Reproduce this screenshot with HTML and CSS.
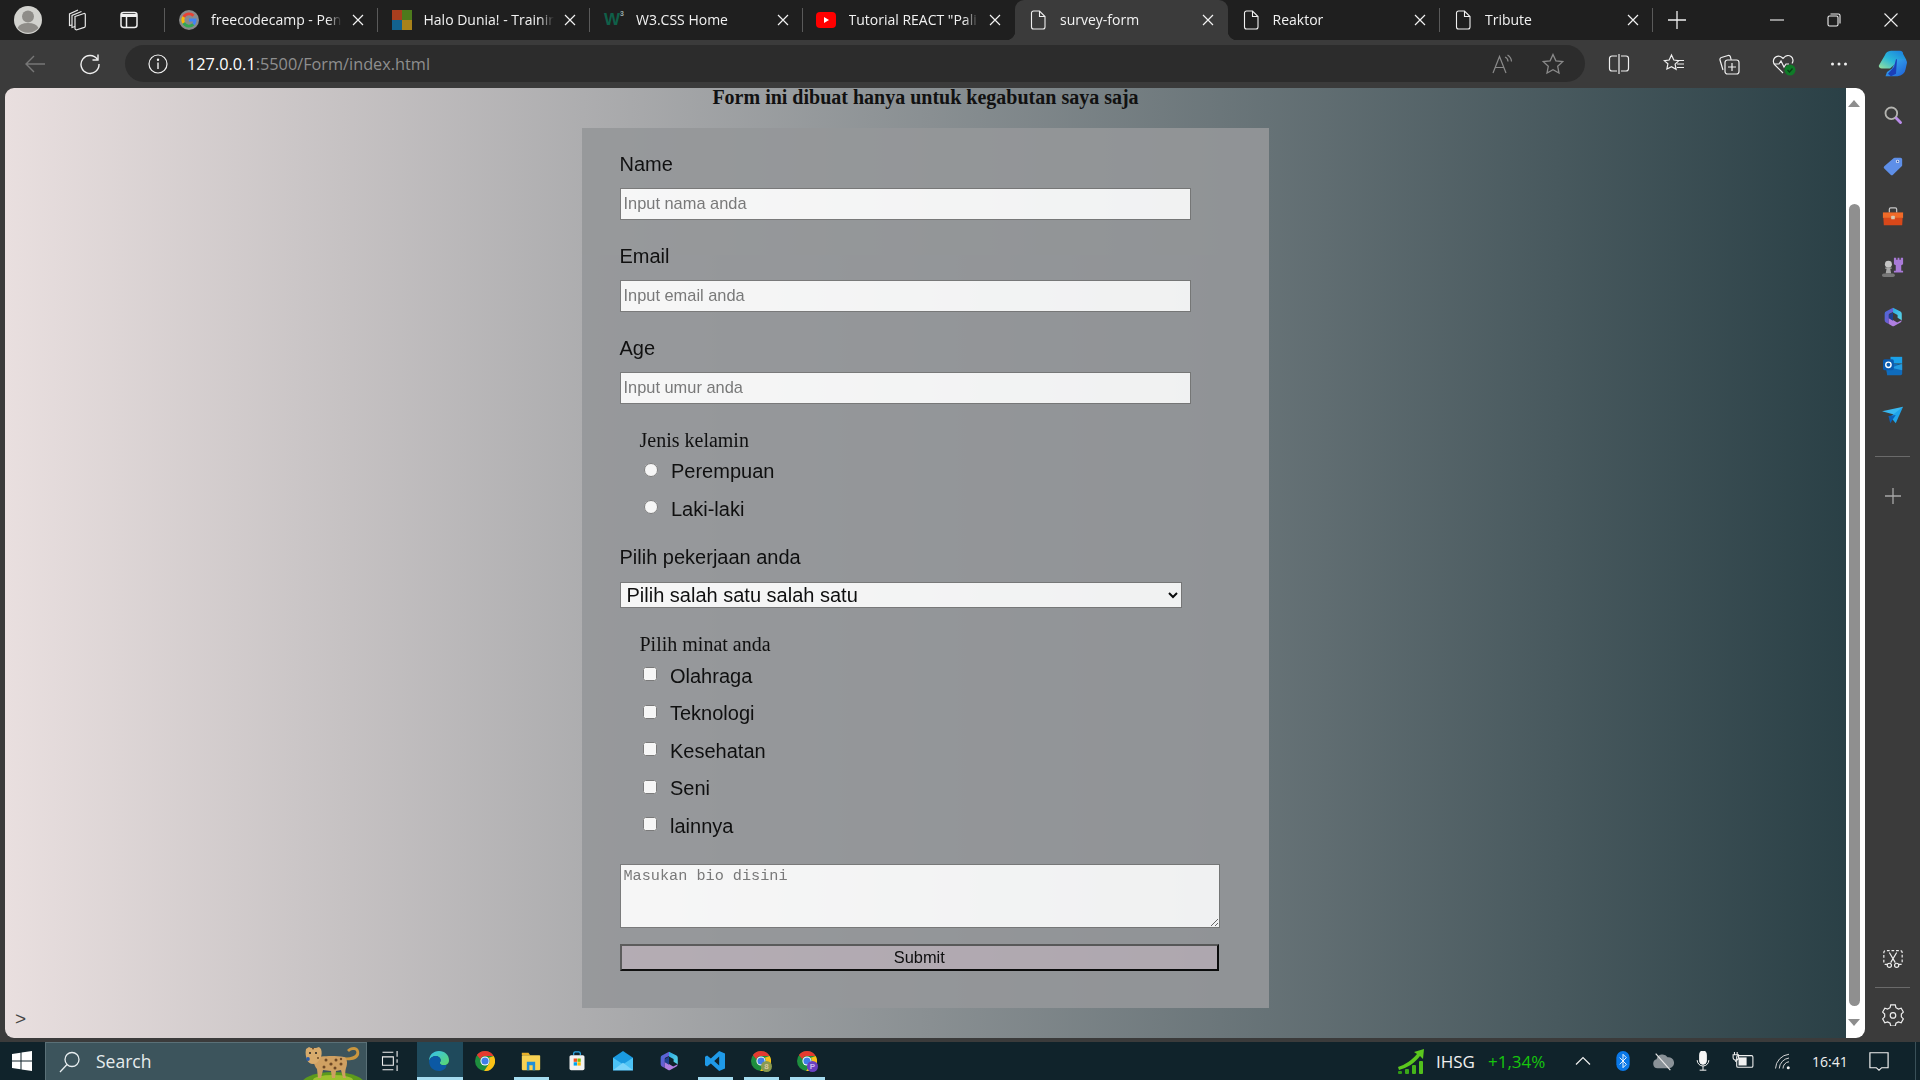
FILE: index.html
```html
<!DOCTYPE html>
<html lang="id">
<head>
<meta charset="utf-8">
<title>survey-form</title>
<link rel="stylesheet" href="styles.css">
</head>
<body>
<svg class="defs" width="0" height="0" aria-hidden="true">
  <symbol id="x" viewBox="0 0 12 12"><path d="M1 1l10 10M11 1L1 11" fill="none" stroke="#f2f2f2" stroke-width="1.2"/></symbol>
  <symbol id="doc" viewBox="0 0 16 20"><path d="M3.5 1h6L15 6.5V17a2 2 0 0 1-2 2H3.500a2 2 0 0 1-2-2V3a2 2 0 0 1 2-2zM9.500 1v5.500H15" fill="none" stroke="#f0f0f0" stroke-width="1.1"/></symbol>
  <symbol id="chrome" viewBox="0 0 24 24"><circle cx="12" cy="12" r="12" fill="#1e8e3e"/><path d="M12 0a12 12 0 0 1 10.400 6H12a6 6 0 0 0-5.600 3.800L2.300 4.900A12 12 0 0 1 12 0z" fill="#e53a30"/><path d="M22.400 6A12 12 0 0 1 11 24l5.500-8.500A6 6 0 0 0 16.500 8z" fill="#fbc116"/><circle cx="12" cy="12" r="5.500" fill="#fff"/><circle cx="12" cy="12" r="4.300" fill="#3f7de8"/></symbol>
  <symbol id="m365" viewBox="0 0 24 24"><defs><linearGradient id="ma" x1="0" y1="0" x2="1" y2="1"><stop offset="0" stop-color="#3f6fd8"/><stop offset="1" stop-color="#8a4fd0"/></linearGradient><linearGradient id="mb" x1="0" y1="0" x2="1" y2="1"><stop offset="0" stop-color="#2aa8e0"/><stop offset="1" stop-color="#5ed8e8"/></linearGradient></defs><path d="M12 1l9 4.500a3 3 0 0 1 1.500 2.600V16l-5-3V9.500L12 6.500z" fill="url(#mb)"/><path d="M12 1L3.500 5.500A3 3 0 0 0 2 8v8a3 3 0 0 0 1.500 2.600L7 20.500V8.500L12 6z" fill="url(#ma)"/><path d="M7 20.500l4 2.200a2.500 2.500 0 0 0 2.400 0l7.600-4.200a3 3 0 0 0 1.500-2.500L17 18.500 12.500 16 7 13z" fill="#b07fe0"/><path d="M7 9.500l5-3v10l-5-3z" fill="#1d3f8f"/></symbol>
</svg>

<header class="tabstrip">
  <div class="strip-left">
    <svg class="avatar" viewBox="0 0 28 28"><circle cx="14" cy="14" r="14" fill="#d2d2ce"/><circle cx="14" cy="10.500" r="6" fill="#8e8c88"/><path d="M3.500 22a11 7 0 0 1 21 0a14 14 0 0 1-21 0z" fill="#8e8c88"/></svg>
    <span class="strip-slot"><svg class="i22" viewBox="0 0 22 22" fill="none" stroke="#e8e8e8" stroke-width="1.200"><path d="M9 7.500L18 4.500a1 1 0 0 1 1.300 1v11.500a1.500 1.500 0 0 1-1 1.400L11 20.800a1.500 1.500 0 0 1-2-1.400z"/><path d="M9 17.500L6 18.500V6.500L15.500 2.500"/><path d="M6 16l-2.500.5V5L12 1"/></svg></span>
    <span class="strip-slot"><svg class="i20" viewBox="0 0 20 20" fill="none" stroke="#f0f0f0" stroke-width="1.500"><rect x="2" y="2.500" width="16" height="15" rx="2.500"/><path d="M2 5.500h16" stroke-width="3"/><path d="M7.500 6v11"/></svg></span>
  </div>
  <div class="tab sep">
    <svg class="fav" viewBox="0 0 18 18" fill="none" stroke-width="2.600"><circle cx="9" cy="9" r="9" fill="#8b8b8b" stroke="none"/><path d="M13 5.200A5.500 5.500 0 0 0 4.200 6.300" stroke="#e94235"/><path d="M4.200 6.300a5.500 5.500 0 0 0 0 5.400" stroke="#fabb05"/><path d="M4.200 11.700a5.500 5.500 0 0 0 8.800 1.100" stroke="#34a853"/><path d="M13 12.800A5.500 5.500 0 0 0 14.500 9H9" stroke="#4285f4"/></svg>
    <span class="title">freecodecamp - Pen</span><svg class="close"><use href="#x"/></svg>
  </div>
  <div class="tab sep">
    <span class="ms"><i class="ms-a"></i><i class="ms-b"></i><i class="ms-c"></i><i class="ms-d"></i></span>
    <span class="title">Halo Dunia! - Trainin</span><svg class="close"><use href="#x"/></svg>
  </div>
  <div class="tab sep">
    <span class="fav w3">W<sup>3</sup></span>
    <span class="title">W3.CSS Home</span><svg class="close"><use href="#x"/></svg>
  </div>
  <div class="tab">
    <svg class="fav yt" viewBox="0 0 20 20"><rect y="2" width="20" height="16" rx="4" fill="#f00"/><path d="M8 7l5 3-5 3z" fill="#fff"/></svg>
    <span class="title">Tutorial REACT "Pali</span><svg class="close"><use href="#x"/></svg>
  </div>
  <div class="tab active">
    <svg class="fav doc"><use href="#doc"/></svg>
    <span class="title">survey-form</span><svg class="close"><use href="#x"/></svg>
  </div>
  <div class="tab sep">
    <svg class="fav doc"><use href="#doc"/></svg>
    <span class="title">Reaktor</span><svg class="close"><use href="#x"/></svg>
  </div>
  <div class="tab sep">
    <svg class="fav doc"><use href="#doc"/></svg>
    <span class="title">Tribute</span><svg class="close"><use href="#x"/></svg>
  </div>
  <svg class="newtab" viewBox="0 0 18 18"><path d="M9 0v18M0 9h18" stroke="#f0f0f0" stroke-width="1.300" fill="none"/></svg>
  <div class="winctl">
    <svg class="wc" viewBox="0 0 14 14"><path d="M0 7h14" stroke="#f0f0f0" stroke-width="1.100"/></svg>
    <svg class="wc" viewBox="0 0 14 14" fill="none" stroke="#f0f0f0" stroke-width="1.100"><rect x="1" y="3" width="10" height="10" rx="1.500"/><path d="M3.500 1h8a1.500 1.500 0 0 1 1.500 1.500v8"/></svg>
    <svg class="wc" viewBox="0 0 14 14"><path d="M.5.500l13 13M13.500.500l-13 13" stroke="#f0f0f0" stroke-width="1.100"/></svg>
  </div>
</header>

<nav class="toolbar">
  <span class="nav-slot"><svg class="i22" viewBox="0 0 22 22" fill="none" stroke="#777" stroke-width="1.400"><path d="M21 11H2M10 3l-8 8 8 8"/></svg></span>
  <span class="nav-slot"><svg class="i22" viewBox="0 0 22 22" fill="none" stroke="#f0f0f0" stroke-width="1.400"><path d="M18.500 6.500A9 9 0 1 0 20 11"/><path d="M19 1.500v5.500h-5.500"/></svg></span>
  <div class="pill">
    <svg class="i20" viewBox="0 0 20 20" fill="none" stroke="#f0f0f0" stroke-width="1.200"><circle cx="10" cy="10" r="9"/><path d="M10 8.500V15" stroke-width="1.400"/><circle cx="10" cy="5.800" r=".6" fill="#f0f0f0"/></svg>
    <span class="url"><b>127.0.0.1</b>:5500/Form/index.html</span>
    <span class="pill-icons">
      <span class="pill-slot"><svg class="i22" viewBox="0 0 22 22" fill="none" stroke="#8a8a8a" stroke-width="1.200"><path d="M1 20L7.500 3.500 14 20M3.500 14.500h8"/><path d="M13 4a5 5 0 0 1 3 4.500M15.500 2a8 8 0 0 1 4 6.500"/></svg></span>
      <span class="pill-slot"><svg class="i22" viewBox="0 0 22 22" fill="none" stroke="#8a8a8a" stroke-width="1.300"><path d="M11 1.500l2.900 6.300 6.800.8-5 4.700 1.300 6.800-6-3.400-6 3.400 1.300-6.800-5-4.700 6.800-.8z"/></svg></span>
    </span>
  </div>
  <div class="tools">
    <span class="tool"><svg class="i22" viewBox="0 0 22 22" fill="none" stroke="#f0f0f0" stroke-width="1.200"><path d="M9 3H4a2.500 2.500 0 0 0-2.500 2.500v10A2.500 2.500 0 0 0 4 18h5M13 3h5a2.500 2.500 0 0 1 2.500 2.500v10A2.500 2.500 0 0 1 18 18h-5M11 1v20"/></svg></span>
    <span class="tool"><svg class="i22" viewBox="0 0 22 22" fill="none" stroke="#f0f0f0" stroke-width="1.200"><path d="M8.500 2l2.300 5 5 .6-3.700 3.500 1 5.200-4.600-2.600L3.900 16l1-5.200L1.200 7.600l5-.6zM14 11h7M14 7.500h7M14 14.500h7"/></svg></span>
    <span class="tool"><svg class="i22" viewBox="0 0 22 22" fill="none" stroke="#f0f0f0" stroke-width="1.200"><path d="M5 17L2 7a2 2 0 0 1 1.400-2.500L10 2.500a2 2 0 0 1 2.400 1.300l.8 3"/><rect x="7" y="7" width="14" height="14" rx="2.500"/><path d="M14 10v8M10 14h8"/></svg></span>
    <span class="tool"><svg class="i24" viewBox="0 0 24 24"><path d="M11 21L3 13a5 5 0 0 1 7-7.500L11 6.500l1-1a5 5 0 0 1 8 6" fill="none" stroke="#f0f0f0" stroke-width="1.200"/><path d="M2 12h5l2-3 3 6 2-3h3" fill="none" stroke="#f0f0f0" stroke-width="1.200"/><circle cx="18" cy="18" r="5.500" fill="#0f7b28"/><path d="M15.500 18l2 2 3-3.500" fill="none" stroke="#0a3d16" stroke-width="1.300"/></svg></span>
    <span class="tool"><svg class="i20" viewBox="0 0 20 20" fill="#f0f0f0"><circle cx="3.500" cy="10" r="1.500"/><circle cx="10" cy="10" r="1.500"/><circle cx="16.500" cy="10" r="1.500"/></svg></span>
    <span class="tool tool-end"><svg class="copilot" viewBox="0 0 30 32" preserveAspectRatio="none"><defs><linearGradient id="ca" x1="0" y1="1" x2="1" y2="0"><stop offset="0" stop-color="#9be29a"/><stop offset=".45" stop-color="#2ab8d8"/><stop offset="1" stop-color="#1a78e0"/></linearGradient><linearGradient id="cb" x1="0" y1="0" x2="1" y2="1"><stop offset="0" stop-color="#39b6f0"/><stop offset="1" stop-color="#1f5fd8"/></linearGradient></defs><path d="M17 1h5a3 3 0 0 1 3 3.500L28.500 12l-10 3-6.500 7H4a3 3 0 0 1-3-4L7 6a7 7 0 0 1 6-5z" fill="url(#ca)"/><path d="M19 11h6a4 4 0 0 1 4 4l-1.500 8a9 9 0 0 1-8 8H7.500L9 26l5-4z" fill="url(#cb)"/><path d="M18 11l-2 9-6 8 3 3 5-3 1-17z" fill="#1b3fb8"/></svg></span>
  </div>
</nav>

<div class="main">
  <main class="page">
    <h3 class="heading">Form ini dibuat hanya untuk kegabutan saya saja</h3>
    <form class="panel">
      <label class="field-label">Name</label>
      <input class="text-input" type="text" placeholder="Input nama anda">
      <label class="field-label">Email</label>
      <input class="text-input" type="text" placeholder="Input email anda">
      <label class="field-label">Age</label>
      <input class="text-input" type="text" placeholder="Input umur anda">
      <div class="group-title">Jenis kelamin</div>
      <label class="opt opt-radio"><input type="radio" name="jk"><span>Perempuan</span></label>
      <label class="opt opt-radio"><input type="radio" name="jk"><span>Laki-laki</span></label>
      <label class="field-label after-radio">Pilih pekerjaan anda</label>
      <select class="job"><option>Pilih salah satu salah satu</option></select>
      <div class="group-title group-minat">Pilih minat anda</div>
      <label class="opt opt-check"><input type="checkbox"><span>Olahraga</span></label>
      <label class="opt opt-check"><input type="checkbox"><span>Teknologi</span></label>
      <label class="opt opt-check"><input type="checkbox"><span>Kesehatan</span></label>
      <label class="opt opt-check"><input type="checkbox"><span>Seni</span></label>
      <label class="opt opt-check"><input type="checkbox"><span>lainnya</span></label>
      <textarea class="bio" placeholder="Masukan bio disini"></textarea>
      <input class="submit" type="submit" value="Submit">
    </form>
    <div class="prompt">&gt;</div>
  </main>
  <div class="scrollbar">
    <i class="arrow-up"></i>
    <i class="thumb"></i>
    <i class="arrow-down"></i>
  </div>
  <aside class="sidebar">
    <div class="side-top">
      <span class="side-slot"><svg viewBox="0 0 24 24" fill="none"><circle cx="10" cy="10" r="7" stroke="#b4b4b0" stroke-width="2.200"/><path d="M16 16l5 5" stroke="#b98be8" stroke-width="3.500" stroke-linecap="round"/></svg></span>
      <span class="side-slot side-down"><svg viewBox="0 0 24 24"><path d="M14 2h7a2 2 0 0 1 2 2v7a2 2 0 0 1-.6 1.400L12 22.500a2 2 0 0 1-2.800 0L1.500 15a2 2 0 0 1 0-2.800L12.600 2.600A2 2 0 0 1 14 2z" fill="#5e8fe8"/><circle cx="17.500" cy="6.500" r="2" fill="#e8eefc"/><circle cx="17.500" cy="6.500" r="1" fill="#2d4f9a"/></svg></span>
      <span class="side-slot side-down"><svg class="wide" viewBox="0 0 24 24"><path d="M8 7V3.500A1.500 1.500 0 0 1 9.500 2h5A1.500 1.500 0 0 1 16 3.500V7" fill="none" stroke="#c8c8c8" stroke-width="1.300"/><path d="M1 7h22v6H1z" fill="#f06a28"/><path d="M1.500 13h21l-.5 8H2z" fill="#d8481a"/><rect x="10" y="10.500" width="4" height="4" rx="1" fill="#d8c8b0"/></svg></span>
      <span class="side-slot"><svg class="wide" viewBox="0 0 24 24"><path d="M13 2h2.500v2H17V2h2v2h1.500V2H23v7l-2 1v6h2v2H13v-2h2v-6l-2-1z" fill="#a97ad8"/><circle cx="7" cy="9" r="3.800" fill="#c4c4c4"/><path d="M3.500 12.500h7v1.500H9l1 5H4l1-5H3.500z" fill="#a8a8a8"/><rect y="19" width="14" height="4" rx="2" fill="#777"/></svg></span>
      <span class="side-slot"><svg><use href="#m365"/></svg></span>
      <span class="side-slot side-up"><svg viewBox="0 0 24 24"><rect x="9" y="1" width="14" height="8" fill="#1aa0e8"/><path d="M3 11l10-2 10 2v10a2 2 0 0 1-2 2H5z" fill="#0f6cbd"/><path d="M10 14l13-5v8z" fill="#28a8ea" opacity=".8"/><rect x="0" y="4" width="13" height="13" rx="2" fill="#0a5bb0"/><circle cx="6.500" cy="10.500" r="3.200" fill="none" stroke="#fff" stroke-width="1.700"/></svg></span>
      <span class="side-slot side-up"><svg class="wide" viewBox="0 0 24 24"><path d="M0 8l23-5-8 9z" fill="#39b8f0"/><path d="M23 3L15 21l-6-7z" fill="#1fa4ea"/><path d="M7 13l2 8 6-9z" fill="#0a5fb8"/></svg></span>
      <i class="side-divider side-divider-top"></i>
      <span class="side-slot"><svg class="i16" viewBox="0 0 16 16"><path d="M8 0v16M0 8h16" stroke="#a8a8a8" stroke-width="1.300"/></svg></span>
    </div>
    <div class="side-bottom">
      <span class="side-slot"><svg class="wide" viewBox="0 0 24 24" fill="none" stroke="#eee" stroke-width="1.300"><path d="M6 19H4a2 2 0 0 1-2-2V6a2 2 0 0 1 2-2h16a2 2 0 0 1 2 2v11a2 2 0 0 1-2 2h-2" stroke-dasharray="3 2"/><path d="M8 6l6.500 11M16 6L9.500 17"/><circle cx="8" cy="20" r="2.300"/><circle cx="16" cy="20" r="2.300"/></svg></span>
      <i class="side-divider"></i>
      <span class="side-slot side-gear"><svg class="wide" viewBox="0 0 24 24" fill="none" stroke="#eee" stroke-width="1.300"><path d="M9.500 1h5l.7 3 2.700 1.500 3-.9 2.400 4.200-2.200 2.200v3l2.200 2.200-2.400 4.200-3-.9-2.700 1.500-.7 3h-5l-.7-3-2.700-1.500-3 .9L.7 16.200 2.900 14v-3L.7 8.800 3.100 4.600l3 .9L8.800 4z"/><circle cx="12" cy="12.500" r="3"/></svg></span>
    </div>
  </aside>
</div>
<div class="edge"></div>

<footer class="taskbar">
  <span class="start"><svg class="winlogo" viewBox="0 0 20 20" fill="#fff"><path d="M0 3l8.500-1.200V9.500H0zM9.500 1.600L20 0v9.500H9.500zM0 10.500h8.500v7.700L0 17zM9.500 10.500H20V20L9.500 18.400z"/></svg></span>
  <div class="search">
    <svg class="i22" viewBox="0 0 22 22" fill="none" stroke="#e8eef0" stroke-width="1.300"><circle cx="13" cy="8.500" r="7"/><path d="M8 13.500L1 21"/></svg>
    <span class="search-text">Search</span>
    <svg class="leopard" viewBox="0 0 66 36">
      <ellipse cx="33" cy="42" rx="33" ry="14" fill="#5d9a1c"/>
      <ellipse cx="33" cy="36" rx="20" ry="5" fill="#9cc22e"/>
      <path d="M44 16C50 17 57 16 59 11c1-4-1-8-5-8-3 0-5 1-7 3l2 2c2-2 3-2 5-2 2 0 3 2 2 4-2 3-8 4-13 3z" fill="#c9963f"/>
      <path d="M14 14c6-2 20-3 30-1 3 1 4 6 2 11-1 3-1 7 0 10h-3l-2-8-5 1-1 7h-3l-1-7-8-1-2 8h-3l-1-9c-3-3-4-9-3-11z" fill="#cfa062"/>
      <path d="M6 5l3-2 2 1h5l3-1 2 2c1 3 1 7-1 10-2 3-4 5-7 5-3 0-5-2-6-4-1-3-2-7-1-11z" fill="#d8ab6c"/>
      <circle cx="10" cy="9" r="1" fill="#222"/><circle cx="16" cy="9" r="1" fill="#222"/><ellipse cx="8" cy="15" rx="1.800" ry="2" fill="#2a5aa8"/>
      <g fill="#6d4826"><circle cx="26" cy="16" r="1.500"/><circle cx="31" cy="20" r="1.600"/><circle cx="36" cy="16" r="1.500"/><circle cx="41" cy="20" r="1.500"/><circle cx="24" cy="23" r="1.500"/><circle cx="35" cy="24" r="1.500"/><circle cx="41" cy="15" r="1.200"/><circle cx="13" cy="4.500" r="1"/><circle cx="18" cy="14" r="1"/></g>
    </svg>
  </div>
  <span class="taskview"><svg class="i20" viewBox="0 0 20 24" fill="none" stroke="#f2f2f2" stroke-width="1.300"><path d="M1 1.500h13M1 22.500h13M1 7h13v10H1z"/><path d="M18.500 0v7M18.500 10v4M18.500 17v7"/></svg></span>
  <span class="app app-active"><svg viewBox="0 0 24 24"><defs><linearGradient id="ea" x1="0" y1="0" x2="1" y2="1"><stop offset="0" stop-color="#35c1f1"/><stop offset="1" stop-color="#5cd86b"/></linearGradient></defs><path d="M12 0c7 0 12 5 12 11 0 4-3 6-6 6-3 0-5-1-5-3 0-1 1-1 1-3 0-3-3-5-6-5C4 6 1 9 0 12 0 5 5 0 12 0z" fill="url(#ea)"/><path d="M0 12c1-3 4-6 8-6 3 0 6 2 6 5 0 2-1 2-1 3 0 2 2 3 5 3l3-.5C21 21 17 24 12 24 5 24 0 19 0 12z" fill="#0c59a4"/></svg></span>
  <span class="app"><svg><use href="#chrome"/></svg></span>
  <span class="app app-open"><svg viewBox="0 0 24 24"><path d="M1 2h8l2 3H1z" fill="#e8b028"/><rect x="1" y="5" width="22" height="18" rx="1" fill="#f8d253"/><path d="M7 13h10v10h-3v-6h-4v6H7z" fill="#1f8fd8"/></svg></span>
  <span class="app"><svg viewBox="0 0 24 24"><path d="M8 5V3a2 2 0 0 1 2-2h4a2 2 0 0 1 2 2v2" fill="none" stroke="#2ca8e8" stroke-width="1.500"/><rect x="3" y="5" width="18" height="18" rx="2" fill="#f2f2f2"/><rect x="8" y="9" width="4" height="4" fill="#f25022"/><rect x="12.500" y="9" width="4" height="4" fill="#7fba00"/><rect x="8" y="13.500" width="4" height="4" fill="#00a4ef"/><rect x="12.500" y="13.500" width="4" height="4" fill="#ffb900"/></svg></span>
  <span class="app"><svg viewBox="0 0 24 24"><path d="M0 8l12-8 12 8v15H0z" fill="#1a9ae0"/><path d="M0 8l12 8 12-8v15H0z" fill="#4cc2f5"/><path d="M0 23l12-9 12 9z" fill="#7ad4fa"/></svg></span>
  <span class="app"><svg><use href="#m365"/></svg></span>
  <span class="app app-open"><svg viewBox="0 0 24 24"><path d="M17 0l7 3v18l-7 3-10-9-4.500 3.500L0 17V7l2.500-1.500L7 9zM17 6.500L11 12l6 5.500z" fill="#1f9ae8"/></svg></span>
  <span class="app app-open"><span class="badged"><svg><use href="#chrome"/></svg><i class="badge badge-cat">8</i></span></span>
  <span class="app app-open"><span class="badged"><svg><use href="#chrome"/></svg><i class="badge badge-p">P</i></span></span>
  <div class="tray">
    <svg class="chart" viewBox="0 0 28 26"><path d="M1 19C8 17 15 12 20 6l-3-2 10-3-1 10-3-3C18 15 10 20 2 22z" fill="#5cc81e"/><rect x="1" y="23" width="4" height="3" rx="1" fill="#2f9a14"/><rect x="8" y="21" width="4" height="5" rx="1" fill="#3aa818"/><rect x="15" y="17" width="4" height="9" rx="1" fill="#45b41a"/><rect x="22" y="13" width="4" height="13" rx="1" fill="#52c01c"/></svg>
    <span class="ihsg">IHSG</span>
    <span class="pct">+1,34%</span>
    <span class="tray-slot tray-first"><svg class="i16" viewBox="0 0 16 16" fill="none" stroke="#f0f0f0" stroke-width="1.200"><path d="M1 11.500L8 4.500l7 7"/></svg></span>
    <span class="tray-slot"><svg class="t-bt" viewBox="0 0 16 24"><rect width="16" height="24" rx="8" fill="#0a78e8"/><path d="M4 8l8 8-4 4V4l4 4-8 8" fill="none" stroke="#fff" stroke-width="1.100"/></svg></span>
    <span class="tray-slot"><svg class="t-cloud" viewBox="0 0 24 24"><path d="M6 20a5 5 0 0 1-1-9.800A6.500 6.500 0 0 1 17 8a5 5 0 0 1 2 12z" fill="#8a9298"/><path d="M4 4l16 18" stroke="#e8e8e8" stroke-width="1.300"/></svg></span>
    <span class="tray-slot"><svg class="t-mic" viewBox="4 0 16 24" fill="none" stroke="#f5f5f5" stroke-width="1.200"><rect x="8" y="0" width="8" height="16" rx="4" fill="#f5f5f5"/><path d="M5 11a7 7 0 0 0 14 0M12 18v5M8 23h8"/></svg></span>
    <span class="tray-slot"><svg class="t-bat" viewBox="0 0 24 20" fill="none" stroke="#f0f0f0" stroke-width="1.200"><rect x="5" y="4" width="18" height="13" rx="1.500"/><rect x="7" y="6" width="9" height="9" fill="#f0f0f0" stroke="none"/><path d="M2.500 0v3M5.500 0v3M1 3h6v3a3 3 0 0 1-6 0zM4 9v2"/></svg></span>
    <span class="tray-slot"><svg class="t-wifi" viewBox="0 0 24 24" fill="none" stroke="#d8d8d8" stroke-width="1.300"><path d="M2 22A20 20 0 0 1 20 3M7 22A15 15 0 0 1 20 8M12 22a9 9 0 0 1 8-9"/><circle cx="19" cy="21" r="2" fill="#f0f0f0" stroke="none"/></svg></span>
    <span class="clock">16:41</span>
    <span class="notif"><svg class="i20" viewBox="0 0 22 24" fill="none" stroke="#f2f2f2" stroke-width="1.300" preserveAspectRatio="none"><path d="M1 2h20v18h-7l-3 3-3-3H1z"/></svg></span>
    <i class="showdesk"></i>
  </div>
</footer>
</body>
</html>
```
FILE: styles.css
```css
* { box-sizing: border-box; }
html, body { margin: 0; height: 100%; overflow: hidden; }
body { width: 1920px; height: 1080px; display: flex; flex-direction: column; background: #3b3b3b; font-family: "Liberation Sans", Arial, sans-serif; }
.defs { position: absolute; }
svg { display: block; flex: none; }
i { display: block; font-style: normal; }
.i16 { width: 16px; height: 16px; }
.i20 { width: 20px; height: 20px; }
.i22 { width: 22px; height: 22px; }
.i24 { width: 24px; height: 24px; }

/* tab strip */
.tabstrip { height: 40px; background: #1f1f1f; display: flex; align-items: stretch; flex: none; }
.strip-left { width: 165px; display: flex; align-items: center; padding-left: 14px; position: relative; flex: none; }
.strip-left::after { content: ""; position: absolute; right: 0; top: 8px; bottom: 8px; width: 1px; background: #5a5a5a; }
.avatar { width: 28px; height: 28px; }
.strip-slot { width: 52px; display: flex; justify-content: center; }
.strip-slot:first-of-type { margin-left: 9px; }
.tab { width: 212.5px; flex: none; display: flex; align-items: center; padding: 0 14px 0 14px; position: relative; color: #f2f2f2; font: 14px "Open Sans", sans-serif; }
.tab.sep::after { content: ""; position: absolute; right: 0; top: 8px; bottom: 8px; width: 1px; background: #5a5a5a; }
.tab.active { background: #3b3b3b; border-radius: 9px 9px 0 0; }
.tab.active::before, .tab.active::after { content: ""; position: absolute; bottom: 0; width: 9px; height: 9px; }
.tab.active::before { left: -9px; background: radial-gradient(circle at 0 0, #1f1f1f 9px, #3b3b3b 9.5px); }
.tab.active::after { right: -9px; background: radial-gradient(circle at 100% 0, #1f1f1f 9px, #3b3b3b 9.5px); }
.fav { width: 20px; height: 20px; flex: none; margin-right: 12px; }
.yt { margin-left: -1px; margin-right: 13px; }
.doc { width: 16px; height: 20px; margin-right: 14px; margin-left: 1px; }
.title { flex: 1; min-width: 0; margin-right: 6px; padding-bottom: 2px; white-space: nowrap; overflow: hidden; -webkit-mask-image: linear-gradient(90deg, #000 86%, transparent 97%); mask-image: linear-gradient(90deg, #000 86%, transparent 97%); }
.close { width: 12px; height: 12px; flex: none; }
.ms { width: 20px; height: 20px; display: grid; grid-template-columns: 1fr 1fr; gap: 0; margin-right: 12px; flex: none; }
.ms-a { background: #a83e1e; }
.ms-b { background: #4d7a1c; }
.ms-c { background: #12628e; }
.ms-d { background: #a8821a; }
.w3 { font: 700 17px/20px "Liberation Sans", sans-serif; color: #0f6049; display: flex; margin-right: 12px; overflow: visible; }
.w3 sup { font-size: 7px; line-height: 8px; color: #9aa; }
.newtab { width: 18px; height: 18px; margin: 11px 0 0 15px; }
.winctl { margin-left: auto; display: flex; align-items: center; padding-right: 22px; gap: 43px; }
.wc { width: 14px; height: 14px; }

/* toolbar */
.toolbar { height: 48px; flex: none; display: flex; align-items: flex-start; padding: 5px 0 0 13px; background: #3b3b3b; }
.nav-slot { width: 44px; height: 37px; display: flex; align-items: center; justify-content: center; margin-right: 11px; }
.nav-slot + .nav-slot { margin-right: 13px; }
.pill { width: 1460px; height: 37px; background: #2c2c2c; border-radius: 18.5px; display: flex; align-items: center; padding: 0 7px 0 23px; flex: none; }
.url { margin-left: 19px; font: 16.300px "Open Sans", sans-serif; color: #8f8f8f; }
.url b { font-weight: 400; color: #fff; }
.pill-icons { margin-left: auto; display: flex; }
.pill-slot { width: 50px; display: flex; justify-content: center; }
.tools { display: flex; margin-left: 6.500px; height: 37px; align-items: center; }
.tool { width: 55px; display: flex; justify-content: center; }
.tool-end { width: 53px; }
.copilot { width: 30px; height: 27px; }

/* main row */
.main { height: 950px; flex: none; display: flex; padding-left: 5px; background: #3b3b3b; }
.page { flex: 1; min-width: 0; overflow: hidden; border-radius: 9px 0 0 9px; background: linear-gradient(90deg, #e9dfdf, #2a4046); color: #000; }
.heading { margin: 0 0 22px; height: 18px; text-align: center; font: 700 20px/18px "Liberation Serif", serif; color: #111; }
.panel { width: 687px; height: 880px; margin: 0 auto; padding: 25px 0 0 37.500px; background: #95979a; opacity: .9; }
.field-label { display: block; font-size: 20px; line-height: 23px; margin-bottom: 12px; }
.after-radio { margin-top: 17.500px; margin-bottom: 13px; }
.text-input { display: block; width: 571px; height: 32px; margin-bottom: 25px; padding: 0 3px 2px; border: 1px solid #767676; background: #fff; font: 16.400px "Liberation Sans", sans-serif; }
.text-input::placeholder, .bio::placeholder { color: #757575; }
.group-title { font: 20px/23px "Liberation Serif", serif; padding-left: 20px; margin: 24px 0 1px; }
.group-minat { margin: 25px 0 2px; }
.opt { display: flex; align-items: center; height: 37.500px; font-size: 20px; line-height: 23px; }
.opt input { margin: 0 0 4px; flex: none; width: 14px; height: 14px; }
.opt-radio { padding-left: 24.500px; gap: 13px; }
.opt-check { padding-left: 23.500px; gap: 13px; }
.job { display: block; width: 562px; height: 26px; padding: 0 0 0 2px; border: 1px solid #767676; background: #fff; font: 20px "Liberation Sans", sans-serif; color: #000; border-radius: 0; }
.bio { display: block; width: 600px; height: 64px; margin-top: 18.500px; padding: 3px; border: 1px solid #767676; background: #fff; font: 15.200px/17px "Liberation Mono", monospace; border-radius: 0; }
.submit { display: block; width: 599.500px; height: 27px; margin-top: 16px; padding: 0; border: 2px outset #000; background: #b6adb5; font: 16.400px "Liberation Sans", sans-serif; color: #000; }
.prompt { padding-left: 10px; font-size: 19px; line-height: 20px; height: 20px; margin-top: 1px; color: #444; }

/* scrollbar */
.scrollbar { width: 19px; flex: none; background: #fff; border-radius: 0 9px 9px 0; padding-top: 12px; display: flex; flex-direction: column; align-items: center; }
.arrow-up { width: 0; height: 0; border: solid transparent; border-width: 0 6.500px 7px; border-bottom-color: #8d8d8d; margin-left: -3px; }
.thumb { width: 11px; height: 802px; margin: 97px 0 13px -3px; background: #8f8f8f; border-radius: 6px; }
.arrow-down { width: 0; height: 0; border: solid transparent; border-width: 7px 6.500px 0; border-top-color: #8d8d8d; margin-left: -3px; }

/* sidebar */
.sidebar { width: 55px; flex: none; display: flex; flex-direction: column; justify-content: space-between; align-items: center; padding-top: 2px; }
.side-top, .side-bottom { display: flex; flex-direction: column; align-items: center; width: 100%; }
.side-slot { height: 50px; width: 100%; display: flex; align-items: center; justify-content: center; }
.side-slot svg { width: 20px; height: 20px; }
.side-slot svg.wide { width: 22px; height: 22px; }
.side-slot svg.i16 { width: 16px; height: 16px; }
.side-down { margin-top: 1px; }
.side-up { margin-top: -1px; }
.side-divider { width: 35px; height: 1px; background: #6a6a6a; margin: 4px 0; flex: none; }
.side-divider-top { margin: 16px 0 14px; }
.side-gear { height: 46px; }

.edge { height: 4px; flex: none; background: #3b3b3b; }

/* taskbar */
.taskbar { height: 38px; flex: none; display: flex; align-items: stretch; background: #10232b; color: #f0f0f0; }
.start { width: 45px; display: flex; align-items: center; justify-content: center; padding-right: 2px; }
.winlogo { width: 20px; height: 20px; }
.search { width: 322px; background: #3c545c; border: 1px solid #5a7077; border-bottom: 0; display: flex; align-items: center; padding-left: 13px; overflow: hidden; }
.search-text { margin-left: 15px; padding-bottom: 2px; font: 17.500px "Open Sans", sans-serif; color: #e6ecee; }
.leopard { width: 66px; height: 36px; margin: 1px 0 0 auto; }
.taskview { width: 49.500px; display: flex; align-items: center; justify-content: center; padding-right: 3px; }
.app { width: 46px; display: flex; align-items: center; justify-content: center; padding-right: 1px; position: relative; }
.app svg { width: 20px; height: 20px; }
.app-active { background: #1f4a5c; }
.app-active::after, .app-open::after { content: ""; position: absolute; bottom: 0; height: 3px; background: #a5dcf0; }
.app-active::after { left: 0; right: 0; }
.app-open::after { left: 5.500px; right: 5.500px; }
.badged { position: relative; display: block; }
.badge { position: absolute; right: -1px; bottom: -1px; width: 11px; height: 11px; border-radius: 50%; font: 700 8px/11px "Liberation Sans", sans-serif; text-align: center; }
.badge-cat { background: #8a9a50; color: #d8c8a0; }
.badge-p { background: #6a3fc0; color: #cbb8f0; }
.tray { width: 525px; margin-left: auto; display: flex; align-items: center; position: relative; }
.chart { width: 28px; height: 26px; margin: 0 0 0 2px; }
.ihsg { margin-left: 11px; font: 17px "Open Sans", sans-serif; width: 39px; }
.pct { margin-left: 13px; font: 17px "Open Sans", sans-serif; color: #16c60c; width: 58px; white-space: nowrap; }
.tray-slot { width: 40px; display: flex; justify-content: center; }
.tray-first { margin-left: 17px; }
.t-bt { width: 14px; height: 20px; }
.t-cloud { width: 22px; height: 22px; }
.t-mic { width: 14px; height: 20px; }
.t-bat { width: 22px; height: 18px; }
.t-wifi { width: 18px; height: 18px; }
.clock { margin-left: 9px; width: 33px; font: 14px "Open Sans", sans-serif; white-space: nowrap; }
.notif { width: 48px; margin-left: 10px; display: flex; justify-content: center; }
.showdesk { position: absolute; right: 4px; top: 0; bottom: 0; width: 1px; background: #3a5058; }
```
